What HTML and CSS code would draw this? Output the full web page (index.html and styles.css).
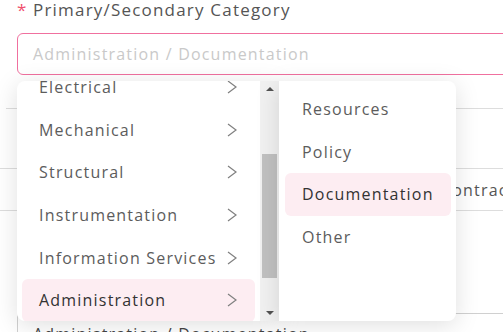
FILE: index.html
```html
<!DOCTYPE html>
<html lang="en">

<head>
    <meta charset="UTF-8">
    <meta name="viewport" content="width=device-width, initial-scale=1.0">
    <title>Primary/Secondary Category</title>
    <link rel="stylesheet" href="styles.css">
</head>

<body>

    <div class="field">
        <label class="field-label"><span class="required">*</span>Primary/Secondary Category</label>
        <div class="field-input placeholder">Administration / Documentation</div>
    </div>

    <!-- Форма под выпадающим списком -->
    <div class="form-rows">
        <div class="form-row first"></div>
        <div class="form-row contractor"><span>Contractor</span></div>
        <div class="form-row tall"></div>
        <div class="field-input value">Administration / Documentation</div>
    </div>

    <!-- Каскадное меню -->
    <div class="cascader">
        <div class="cascader-panel primary">
            <ul class="cascader-list">
                <li>Electrical <svg class="arrow" viewBox="0 0 10 14"><polyline points="1,1 9,7 1,13"/></svg></li>
                <li>Mechanical <svg class="arrow" viewBox="0 0 10 14"><polyline points="1,1 9,7 1,13"/></svg></li>
                <li>Structural <svg class="arrow" viewBox="0 0 10 14"><polyline points="1,1 9,7 1,13"/></svg></li>
                <li>Instrumentation <svg class="arrow" viewBox="0 0 10 14"><polyline points="1,1 9,7 1,13"/></svg></li>
                <li>Information Services <svg class="arrow" viewBox="0 0 10 14"><polyline points="1,1 9,7 1,13"/></svg></li>
                <li class="active">Administration <svg class="arrow" viewBox="0 0 10 14"><polyline points="1,1 9,7 1,13"/></svg></li>
            </ul>
            <div class="scrollbar">
                <span class="scroll-btn up"></span>
                <div class="scroll-track"><div class="scroll-thumb"></div></div>
                <span class="scroll-btn down"></span>
            </div>
        </div>
        <div class="cascader-panel secondary">
            <ul class="cascader-list">
                <li>Resources</li>
                <li>Policy</li>
                <li class="active">Documentation</li>
                <li>Other</li>
            </ul>
        </div>
    </div>

</body>

</html>
```

FILE: styles.css
```css
/* Основные стили */
body {
    margin: 0;
    font-family: 'Open Sans', 'Noto Sans', sans-serif;
    letter-spacing: 0.075em;
    color: #555555;
    background: #ffffff;
    position: relative;
    width: 503px;
    height: 332px;
    overflow: hidden;
}

.field {
    padding-left: 17px;
}

.field-label {
    display: flex;
    align-items: center;
    height: 18px;
    font-size: 17px;
    color: #555555;
}

.required {
    color: #f0506e;
    width: 16px;
    font-size: 17px;
    letter-spacing: 0;
}

.field-input {
    box-sizing: border-box;
    height: 42px;
    margin-top: 15px;
    width: 520px;
    padding-left: 15px;
    display: flex;
    align-items: center;
    font-size: 16px;
    border-radius: 6px;
    white-space: nowrap;
}

.placeholder {
    border: 1px solid #f0709f;
    color: #c9c9c9;
}

/* Строки формы под меню */
.form-rows {
    margin-top: 33px;
}

.form-row {
    border-top: 1px solid #dddddd;
}

.form-row.first {
    margin-left: 6px;
    height: 59px;
}

.form-row.contractor {
    height: 41px;
    display: flex;
    align-items: center;
    padding-left: 441px;
    font-size: 16px;
    color: #555555;
    white-space: nowrap;
}

.form-row.tall {
    height: 102px;
}

.field-input.value {
    margin: 0 0 0 17px;
    height: 40px;
    align-items: flex-start;
    padding-top: 9px;
    border: 1px solid #d0d0d0;
    border-radius: 4px;
    color: #444444;
}

/* Каскадное меню */
.cascader {
    position: absolute;
    top: 81px;
    left: 17px;
    display: flex;
    align-items: flex-start;
}

.cascader-panel {
    background: #ffffff;
    height: 240px;
    border-radius: 8px;
    box-shadow: 0 4px 24px rgba(0, 0, 0, 0.13);
    overflow: hidden;
    display: flex;
}

.cascader-panel.primary {
    width: 262px;
    border-radius: 8px 0 0 8px;
}

.cascader-panel.primary .cascader-list {
    margin-top: -15px;
    width: 243px;
}

.cascader-panel.secondary {
    width: 177px;
    border-radius: 0 8px 8px 0;
}

.cascader-list {
    list-style: none;
    margin: 0;
    padding: 0 5px 0 5px;
    box-sizing: border-box;
    width: 100%;
}

.cascader-panel.secondary .cascader-list {
    padding-top: 7px;
    padding-left: 6px;
}

.cascader-list li {
    height: 42.6px;
    display: flex;
    align-items: center;
    justify-content: space-between;
    padding-left: 17px;
    padding-right: 18px;
    font-size: 16px;
    color: #5c5c5c;
    border-radius: 6px;
    white-space: nowrap;
}

.cascader-list li.active {
    background: #fdedf2;
    color: #333333;
}

.arrow {
    width: 10px;
    height: 14px;
    fill: none;
    stroke: #808080;
    stroke-width: 1.2;
}

/* Полоса прокрутки */
.scrollbar {
    width: 19px;
    background: #f1f1f1;
    display: flex;
    flex-direction: column;
}

.scroll-btn {
    height: 17px;
    position: relative;
}

.scroll-btn::after {
    content: '';
    position: absolute;
    left: 6px;
    width: 0;
    height: 0;
    border-left: 4px solid transparent;
    border-right: 4px solid transparent;
}

.scroll-btn.up::after {
    top: 6px;
    border-bottom: 4px solid #505050;
}

.scroll-btn.down::after {
    top: 7px;
    border-top: 4px solid #505050;
}

.scroll-track {
    flex: 1;
    padding: 0 2px;
}

.scroll-thumb {
    margin-top: 56px;
    height: 124px;
    background: #c1c1c1;
}
```
